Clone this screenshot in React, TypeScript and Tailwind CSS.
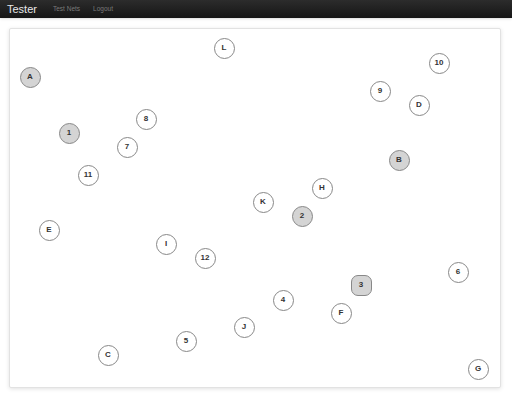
import React from 'react'

type Node = { id: string; x: number; y: number; filled?: boolean; square?: boolean }

// centres measured in page coordinates, shifted into the canvas below
const nodes: Node[] = [
    { id: 'A', x: 30, y: 77, filled: true },
    { id: 'L', x: 224, y: 48 },
    { id: '10', x: 439, y: 63 },
    { id: '9', x: 380, y: 91 },
    { id: 'D', x: 419, y: 105 },
    { id: '8', x: 146, y: 119 },
    { id: '1', x: 69, y: 133, filled: true },
    { id: '7', x: 127, y: 147 },
    { id: 'B', x: 399, y: 160, filled: true },
    { id: '11', x: 88, y: 175 },
    { id: 'H', x: 322, y: 188 },
    { id: 'K', x: 263, y: 202 },
    { id: '2', x: 302, y: 216, filled: true },
    { id: 'E', x: 49, y: 230 },
    { id: 'I', x: 166, y: 244 },
    { id: '12', x: 205, y: 258 },
    { id: '6', x: 458, y: 272 },
    { id: '3', x: 361, y: 285, filled: true, square: true },
    { id: '4', x: 283, y: 300 },
    { id: 'F', x: 341, y: 313 },
    { id: 'J', x: 244, y: 327 },
    { id: '5', x: 186, y: 341 },
    { id: 'C', x: 108, y: 355 },
    { id: 'G', x: 478, y: 369 },
]

const PANEL_X = 9
const PANEL_Y = 28

const App = () => {
    return (
        <div className="w-[512px] h-[400px] bg-white overflow-hidden font-['Liberation_Sans',Arial,sans-serif]">
            {/* Top bar */}
            <div className="h-[18px] bg-gradient-to-b from-[#2c2c2c] to-[#161616] flex items-center px-[7px] gap-4 shadow-sm">
                <span className="text-[11px] leading-none text-[#e8e8e8]">Tester</span>
                <div className="flex items-center gap-[13px] text-[6.5px] leading-none text-[#7a7a7a]">
                    <span>Test Nets</span>
                    <span>Logout</span>
                </div>
            </div>

            {/* Canvas */}
            <div className="mt-[10px] ml-[9px] w-[492px] h-[360px] relative bg-white border border-[#e2e2e2] rounded-[2px] shadow-[0_1px_4px_rgba(0,0,0,0.12)]">
                {nodes.map((n) => (
                    <div
                        key={n.id}
                        className={
                            'absolute w-[21px] h-[21px] flex items-center justify-center border-[1.5px] border-[#888] text-[8px] font-semibold text-[#333] ' +
                            (n.square ? 'rounded-[7px] ' : 'rounded-full ') +
                            (n.filled ? 'bg-[#d4d4d4]' : 'bg-white')
                        }
                        style={{ left: n.x - PANEL_X - 11.5, top: n.y - PANEL_Y - 11.5 }}
                    >
                        {n.id}
                    </div>
                ))}
            </div>
        </div>
    )
}

export default App
